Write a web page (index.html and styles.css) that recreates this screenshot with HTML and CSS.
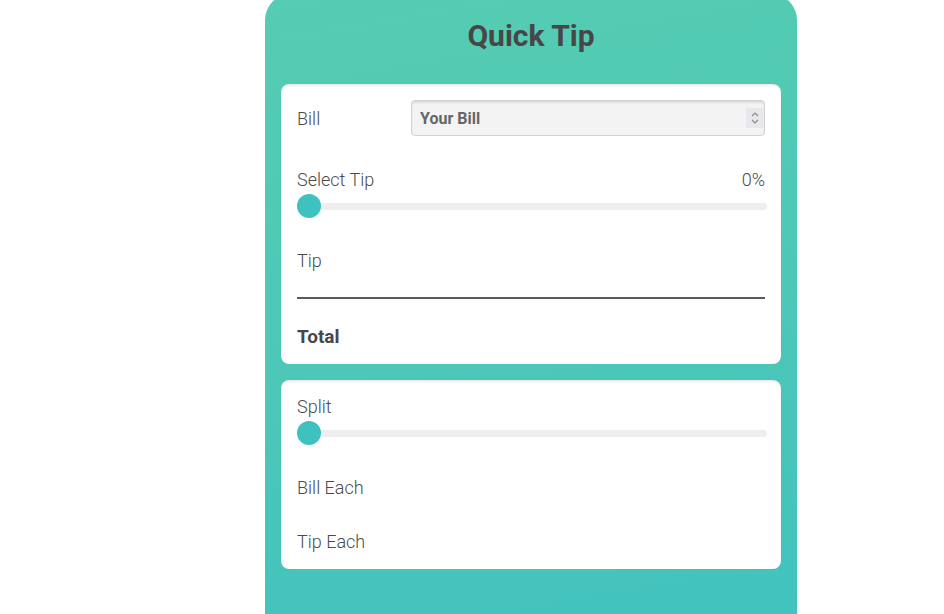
FILE: index.html
```html
<!DOCTYPE html>
<html lang="en">
<head>
<meta charset="utf-8">
<title>Quick Tip</title>
<link rel="stylesheet" href="styles.css">
</head>
<body>
<main class="app">
  <h1 class="title">Quick Tip</h1>
  <section class="card card-bill">
    <div class="bill-row">
      <label class="label bill-label" for="bill">Bill</label>
      <div class="bill-field">
        <input class="bill-input" id="bill" type="number" placeholder="Your Bill">
        <span class="spin">
          <svg width="10" height="16" viewBox="0 0 10 16" aria-hidden="true">
            <path d="M2 6 L5 3 L8 6" fill="none" stroke="#8a8a8a" stroke-width="1.2"/>
            <path d="M2 10 L5 13 L8 10" fill="none" stroke="#8a8a8a" stroke-width="1.2"/>
          </svg>
        </span>
      </div>
    </div>
    <div class="tip-head">
      <span class="label">Select Tip</span>
      <span class="label">0%</span>
    </div>
    <input class="slider slider-tip" type="range" min="0" max="30" value="0">
    <div class="label tip-label">Tip</div>
    <hr class="divider">
    <div class="total">Total</div>
  </section>
  <section class="card card-split">
    <div class="label">Split</div>
    <input class="slider slider-split" type="range" min="1" max="10" value="1">
    <div class="label each each-bill">Bill Each</div>
    <div class="label each each-tip">Tip Each</div>
  </section>
</main>
</body>
</html>
```
FILE: styles.css
```css
* { box-sizing: border-box; }
html, body { margin: 0; padding: 0; background: #fff; overflow: hidden; }
body {
  font-family: Roboto, "Liberation Sans", sans-serif;
  color: #4a4a4a;
  height: 614px;
}
.app {
  width: 532px;
  margin: -6px 0 0 265px;
  padding: 0 16px 60px;
  border-radius: 26px;
  background: linear-gradient(170deg, #56cdb2 0%, #4cc7b8 50%, #40c2c0 100%);
  min-height: 700px;
}
.title {
  margin: 0;
  padding: 22px 0 28px;
  line-height: 40px;
  font-size: 30px;
  font-weight: 700;
  text-align: center;
  color: #474747;
}
.card {
  background: #fff;
  border-radius: 8px;
  box-shadow: inset 0 2px 2px rgba(0,0,0,0.08), 0 0 1px rgba(0,0,0,0.1);
  padding: 16px 16px 15px;
}
.card-split { margin-top: 16px; padding-top: 15px; }
.label {
  font-size: 18px;
  font-weight: 300;
  line-height: 24px;
  color: #4a4a4a;
}
.bill-row {
  display: flex;
  align-items: center;
  height: 36px;
}
.bill-label { width: 114px; padding-top: 1px; }
.bill-field {
  position: relative;
  flex: 1;
}
.bill-input {
  display: block;
  width: 100%;
  height: 36px;
  padding: 0 30px 0 8px;
  border: 1px solid #d2d2d2;
  border-radius: 4px;
  background: #f3f3f3;
  box-shadow: inset 0 2px 2px rgba(0,0,0,0.1);
  font-family: Roboto, "Liberation Sans", sans-serif;
  font-size: 16px;
  font-weight: 700;
  color: #555;
  -moz-appearance: textfield;
}
.bill-input::placeholder { color: #666; opacity: 1; }
.bill-input::-webkit-outer-spin-button,
.bill-input::-webkit-inner-spin-button { -webkit-appearance: none; margin: 0; }
.spin {
  position: absolute;
  right: 2px;
  top: 8px;
  width: 17px;
  height: 20px;
  background: #e8e8ec;
  display: flex;
  align-items: center;
  justify-content: center;
}
.tip-head {
  display: flex;
  justify-content: space-between;
  margin-top: 32px;
}
.slider {
  -webkit-appearance: none;
  appearance: none;
  display: block;
  width: calc(100% + 2px);
  height: 24px;
  margin: 2px 0 0;
  padding: 0;
  background: transparent;
}
.slider::-webkit-slider-runnable-track {
  height: 7px;
  border-radius: 4px;
  background: #eeeeee;
}
.slider::-webkit-slider-thumb {
  -webkit-appearance: none;
  width: 24px;
  height: 24px;
  margin-top: -8.5px;
  border-radius: 50%;
  background: #3fc1c0;
  border: none;
}
.tip-label { margin-top: 31px; }
.divider {
  margin: 24px 0 0;
  border: 0;
  height: 2px;
  background: #5a5a5a;
}
.total {
  margin-top: 26px;
  font-size: 19px;
  font-weight: 700;
  line-height: 24px;
  color: #474747;
}
.each-bill { margin-top: 31px; }
.each-tip { margin-top: 30px; }
```
